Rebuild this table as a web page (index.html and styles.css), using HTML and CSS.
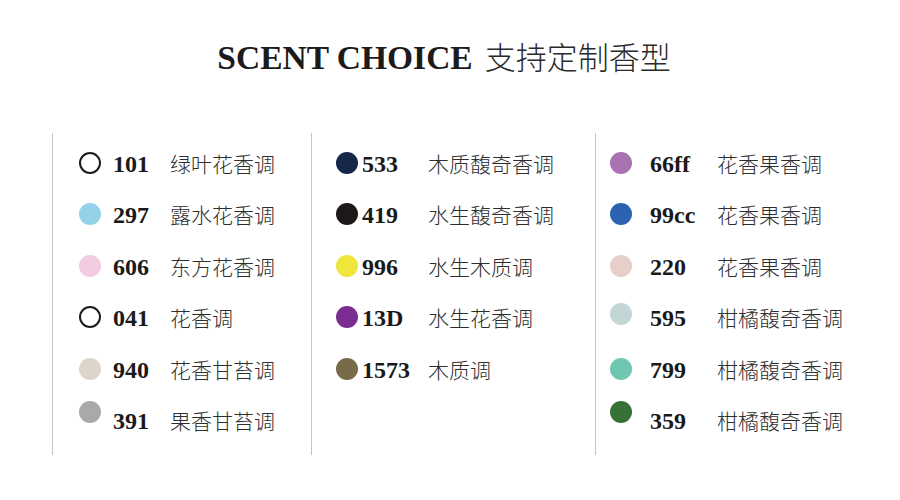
FILE: index.html
```html
<!DOCTYPE html>
<html lang="zh">
<head>
<meta charset="utf-8">
<title>Scent Choice</title>
<link rel="stylesheet" href="styles.css">
</head>
<body>
<div class="page">
  <header class="header">
    <h1 class="title"><span class="title-en">SCENT CHOICE</span><span class="title-zh">支持定制香型</span></h1>
  </header>
  <section class="grid">
    <div class="col col1">
      <div class="item"><span class="dot outline"></span><span class="num">101</span><span class="name">绿叶花香调</span></div>
      <div class="item"><span class="dot" style="background:#93d2e9"></span><span class="num">297</span><span class="name">露水花香调</span></div>
      <div class="item"><span class="dot" style="background:#f1cce1"></span><span class="num">606</span><span class="name">东方花香调</span></div>
      <div class="item"><span class="dot outline"></span><span class="num">041</span><span class="name">花香调</span></div>
      <div class="item"><span class="dot" style="background:#ddd5ca"></span><span class="num">940</span><span class="name">花香甘苔调</span></div>
      <div class="item raised"><span class="dot" style="background:#a9a9a9"></span><span class="num">391</span><span class="name">果香甘苔调</span></div>
    </div>
    <div class="col col2">
      <div class="item"><span class="dot" style="background:#15284a"></span><span class="num">533</span><span class="name">木质馥奇香调</span></div>
      <div class="item"><span class="dot" style="background:#1e1819"></span><span class="num">419</span><span class="name">水生馥奇香调</span></div>
      <div class="item"><span class="dot" style="background:#efe63a"></span><span class="num">996</span><span class="name">水生木质调</span></div>
      <div class="item"><span class="dot" style="background:#7b2d91"></span><span class="num">13D</span><span class="name">水生花香调</span></div>
      <div class="item"><span class="dot" style="background:#786b4a"></span><span class="num">1573</span><span class="name">木质调</span></div>
    </div>
    <div class="col col3">
      <div class="item"><span class="dot" style="background:#a972b1"></span><span class="num">66ff</span><span class="name">花香果香调</span></div>
      <div class="item"><span class="dot" style="background:#2b62b1"></span><span class="num">99cc</span><span class="name">花香果香调</span></div>
      <div class="item"><span class="dot" style="background:#e7cfc9"></span><span class="num">220</span><span class="name">花香果香调</span></div>
      <div class="item lifted"><span class="dot" style="background:#c3d6d5"></span><span class="num">595</span><span class="name">柑橘馥奇香调</span></div>
      <div class="item"><span class="dot" style="background:#70c7b1"></span><span class="num">799</span><span class="name">柑橘馥奇香调</span></div>
      <div class="item raised"><span class="dot" style="background:#367237"></span><span class="num">359</span><span class="name">柑橘馥奇香调</span></div>
    </div>
  </section>
</div>
</body>
</html>
```
FILE: styles.css
```css
html, body {
  margin: 0;
  padding: 0;
  background: #ffffff;
}
.page {
  width: 900px;
  height: 500px;
  overflow: hidden;
}
.header {
  height: 133px;
  display: flex;
  justify-content: center;
  align-items: flex-start;
  padding-right: 12px;
}
.title {
  margin: 33px 0 0 0;
  font-weight: normal;
  display: flex;
  align-items: baseline;
  gap: 12px;
  color: #1c1a1a;
}
.title-en {
  font-family: "Liberation Serif", serif;
  font-weight: bold;
  font-size: 33.5px;
}
.title-zh {
  font-family: "Noto Sans CJK SC", sans-serif;
  font-weight: 300;
  font-size: 31px;
  color: #2a2a2a;
}
.grid {
  display: grid;
  grid-template-columns: 259px 284px 262px;
  margin-left: 52px;
  height: 322px;
}
.col {
  border-left: 1px solid #c4c4c4;
  padding-top: 4px;
  display: flex;
  flex-direction: column;
}
.item {
  height: 51.5px;
  display: flex;
  align-items: center;
  padding-left: var(--pad);
}
.dot {
  width: 22px;
  height: 22px;
  border-radius: 50%;
  flex: none;
  box-sizing: border-box;
}
.dot.outline {
  background: #fff;
  border: 2px solid #1c1c1c;
}
.raised .dot {
  margin-bottom: 16px;
}
.lifted .dot {
  margin-bottom: 6px;
}
.num {
  font-family: "Liberation Serif", serif;
  font-weight: bold;
  font-size: 24px;
  color: #1a1a1a;
  margin-left: var(--gap);
  width: var(--num);
  flex: none;
  padding-top: 3px;
}
.name {
  font-family: "Noto Sans CJK SC", sans-serif;
  font-weight: 300;
  font-size: 21px;
  color: #2e2e2e;
}
.col1 { --pad: 26px; --gap: 12px; --num: 57px; }
.col2 { --pad: 24px; --gap: 4px; --num: 66px; }
.col3 { --pad: 14px; --gap: 18px; --num: 67px; }
```
